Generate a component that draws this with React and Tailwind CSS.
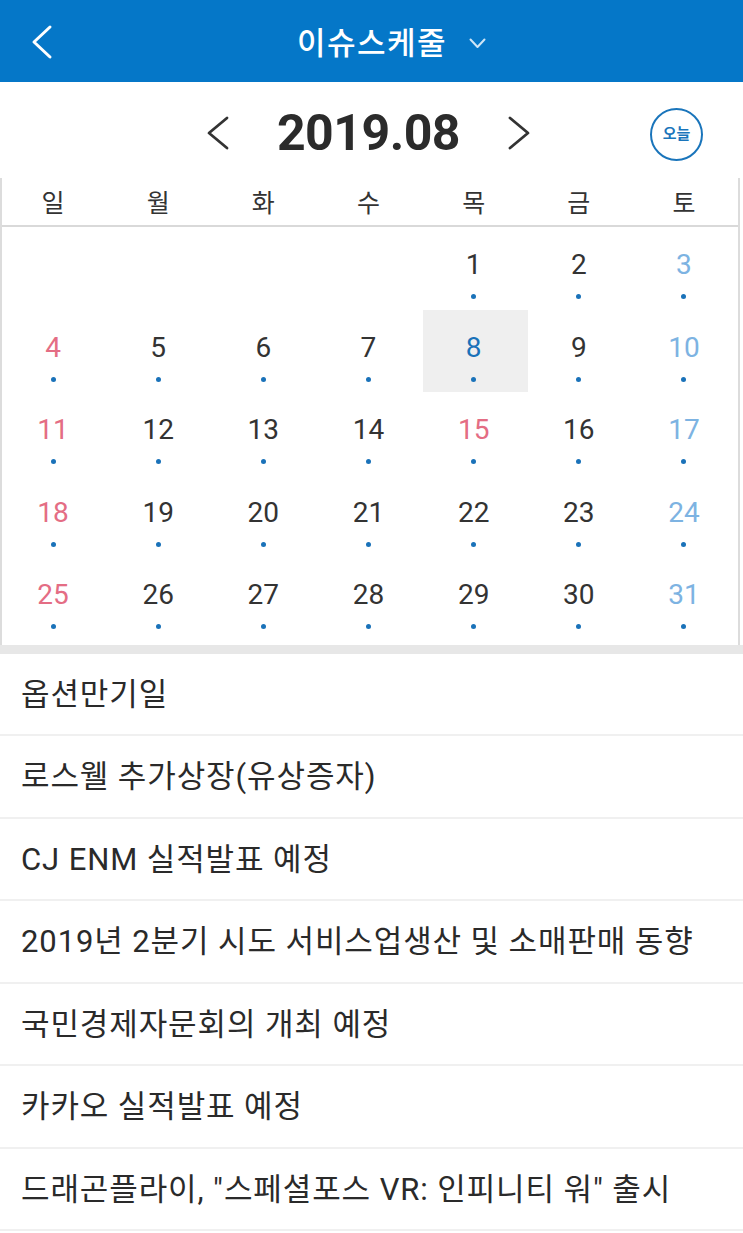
import React from 'react';

const FONT = { fontFamily: "Roboto, 'Noto Sans CJK KR', 'Noto Sans', sans-serif" };

const WEEKDAYS = ['일', '월', '화', '수', '목', '금', '토'];

const EVENTS = [
  '옵션만기일',
  '로스웰 추가상장(유상증자)',
  'CJ ENM 실적발표 예정',
  '2019년 2분기 시도 서비스업생산 및 소매판매 동향',
  '국민경제자문회의 개최 예정',
  '카카오 실적발표 예정',
  '드래곤플라이, "스페셜포스 VR: 인피니티 워" 출시',
];

// August 2019 starts on Thursday
function buildDays() {
  const cells = [];
  for (let i = 0; i < 4; i++) cells.push(null);
  for (let d = 1; d <= 31; d++) cells.push(d);
  return cells;
}

const HOLIDAYS = [15];
const TODAY = 8;

function dayColor(day, col) {
  if (day === TODAY) return 'text-[#1a72b9]';
  if (col === 0 || HOLIDAYS.includes(day)) return 'text-[#e46d84]';
  if (col === 6) return 'text-[#7db3e2]';
  return 'text-[#333333]';
}

function Chevron({ dir = 'left', className = '' }) {
  const pts = dir === 'left' ? '22,2 4,17 22,32' : '4,2 22,17 4,32';
  return (
    <svg width="26" height="34" viewBox="0 0 26 34" className={className}>
      <polyline points={pts} fill="none" stroke="currentColor" strokeWidth="2.8" strokeLinecap="round" strokeLinejoin="round" />
    </svg>
  );
}

export default function App() {
  const days = buildDays();

  return (
    <div className="w-[743px] bg-white" style={FONT}>
      {/* Header */}
      <div className="relative h-[82px] bg-[#0577c8] flex items-center justify-center">
        <button className="absolute left-[30px] top-[24px] text-white">
          <svg width="24" height="36" viewBox="0 0 24 36">
            <polyline points="20,3 4,18 20,33" fill="none" stroke="currentColor" strokeWidth="3" strokeLinecap="round" strokeLinejoin="round" />
          </svg>
        </button>
        <div className="flex items-center gap-[22px] pl-[40px] pt-[4px]">
          <span className="text-white text-[31px] font-medium leading-none tracking-[1.5px]">이슈스케줄</span>
          <svg width="17" height="11" viewBox="0 0 17 11">
            <polyline points="1.5,1.5 8.5,9 15.5,1.5" fill="none" stroke="#cfe5f6" strokeWidth="2" strokeLinecap="round" strokeLinejoin="round" />
          </svg>
        </div>
      </div>

      {/* Month switcher */}
      <div className="relative h-[96px] flex items-center justify-center pt-[6px]">
        <div className="flex items-center gap-[46px] pr-[6px] text-[#333]">
          <Chevron dir="left" />
          <span className="text-[50px] font-bold leading-none text-[#2b2b2b] tracking-[-0.5px]">2019.08</span>
          <Chevron dir="right" />
        </div>
        <div className="absolute right-[40px] top-[26px] w-[53px] h-[53px] rounded-full border-[2.5px] border-[#1a75bb] flex items-center justify-center">
          <span className="text-[15px] font-bold text-[#1a75bb] leading-none">오늘</span>
        </div>
      </div>

      {/* Calendar */}
      <div className="mr-[3px] border-x-2 border-[#dcdcdc]">
        <div className="grid grid-cols-7 h-[49px] border-b-2 border-[#d9d9d9] items-center">
          {WEEKDAYS.map((w) => (
            <div key={w} className="text-center text-[25px] text-[#333] leading-none pt-[3px] pr-[3px]">
              {w}
            </div>
          ))}
        </div>
        <div className="grid grid-cols-7 pb-[5px]">
          {days.map((d, i) => (
            <div
              key={i}
              className={`h-[82.6px] flex flex-col items-center ${d === TODAY ? 'bg-[#efefef]' : ''}`}
            >
              {d && (
                <>
                  <span className={`mt-[22px] mr-[3px] text-[28px] leading-[32px] ${dayColor(d, i % 7)}`}>{d}</span>
                  <span className="mt-[13px] mr-[3px] w-[5px] h-[5px] rounded-full bg-[#1a72b9]" />
                </>
              )}
            </div>
          ))}
        </div>
      </div>
      <div className="h-[9px] bg-[#e7e7e7]" />

      {/* Event list */}
      <ul>
        {EVENTS.map((e) => (
          <li
            key={e}
            className="h-[82.5px] border-b-2 border-[#f0f0f0] flex items-center pl-[21px] text-[31px] text-[#2a2a2a] leading-none tracking-[0.9px]"
          >
            {e}
          </li>
        ))}
      </ul>
    </div>
  );
}
